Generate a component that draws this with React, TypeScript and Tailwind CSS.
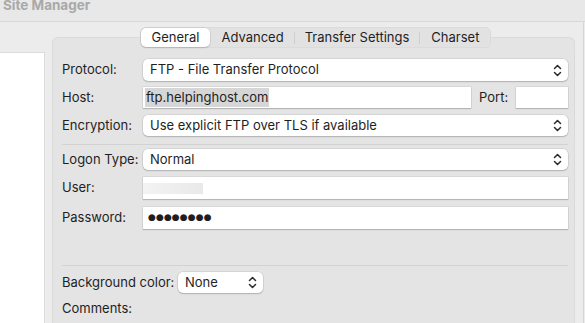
import React from 'react';

function Chevrons() {
  return (
    <svg width="9" height="13" viewBox="0 0 9 13" fill="none" stroke="#2b2b2b" strokeWidth="1.5" strokeLinecap="round" strokeLinejoin="round">
      <path d="M1.5 4.5 L4.5 1.5 L7.5 4.5" />
      <path d="M1.5 8.5 L4.5 11.5 L7.5 8.5" />
    </svg>
  );
}

function Select({ value, className = '' }: { value: string; className?: string }) {
  return (
    <div className={`h-full bg-white rounded-[5px] shadow-[0_0_0_0.5px_rgba(0,0,0,0.12),0_1px_1.5px_rgba(0,0,0,0.18)] pl-[7px] pr-[6px] flex items-center justify-between ${className}`}>
      <span>{value}</span>
      <Chevrons />
    </div>
  );
}

function Field({ children, className = '' }: { children?: React.ReactNode; className?: string }) {
  return (
    <div className={`h-full bg-white shadow-[0_0_0_0.5px_rgba(0,0,0,0.1),0_1px_1px_rgba(0,0,0,0.16)] flex items-center ${className}`}>
      {children}
    </div>
  );
}

export default function App() {
  return (
    <div className="w-[585px] h-[323px] overflow-hidden bg-[#ececec] flex flex-col font-['Inter','Liberation_Sans',sans-serif] text-[13px] text-[#1f1f1f]">
      {/* title bar */}
      <div className="h-[22px] shrink-0 bg-[#e8e8e8] border-b border-[#d8d8d8] pl-[3px] text-[13.5px] font-bold text-[#a9a9a9] leading-[11px]">
        Site Manager
      </div>

      <div className="flex flex-1 min-h-0">
        {/* site tree */}
        <div className="w-[45px] shrink-0 mt-[30px] bg-white border-r border-t border-[#dcdcdc]" />

        {/* settings */}
        <div className="ml-[7px] w-[523px] shrink-0 pt-[5px] flex flex-col">
          <div className="flex justify-center relative z-10 pl-[4px]">
            <div className="h-[21px] flex items-center bg-[#e2e2e2] rounded-[6px] shadow-[inset_0_0_0_0.5px_rgba(0,0,0,0.06)] pl-[1px] pr-[1px]">
              <div className="h-[19px] px-[11px] flex items-center bg-white rounded-[5px] shadow-[0_0_0_0.5px_rgba(0,0,0,0.1),0_1px_1.5px_rgba(0,0,0,0.15)]">
                General
              </div>
              <div className="pl-[11px] pr-[10px]">Advanced</div>
              <div className="w-px h-[12px] bg-[#cfcfcf]" />
              <div className="px-[10px]">Transfer Settings</div>
              <div className="w-px h-[12px] bg-[#cfcfcf]" />
              <div className="px-[11px]">Charset</div>
            </div>
          </div>

          <div className="-mt-[11px] flex-1 bg-[#e4e4e4] border border-b-0 border-[#dadada] rounded-t-[6px] pt-[21px] pl-[9px] pr-[6px]">
            <div className="h-[22px] flex items-center">
              <div className="w-[81px] shrink-0">Protocol:</div>
              <Select value="FTP - File Transfer Protocol" className="flex-1" />
            </div>

            <div className="h-[21px] mt-[6px] flex items-center">
              <div className="w-[81px] shrink-0">Host:</div>
              <Field className="w-[328px] pl-[2px]">
                <span className="bg-[#d6d6d6] px-[1px] leading-[19px]">ftp.helpinghost.com</span>
              </Field>
              <div className="ml-[8px]">Port:</div>
              <Field className="ml-auto w-[52px]" />
            </div>

            <div className="h-[21px] mt-[7px] flex items-center">
              <div className="w-[81px] shrink-0">Encryption:</div>
              <Select value="Use explicit FTP over TLS if available" className="flex-1" />
            </div>

            <div className="h-px mt-[8px] bg-[#d2d2d2]" />

            <div className="h-[21px] mt-[4px] flex items-center">
              <div className="w-[81px] shrink-0">Logon Type:</div>
              <Select value="Normal" className="flex-1" />
            </div>

            <div className="h-[22px] mt-[7px] flex items-center">
              <div className="w-[81px] shrink-0">User:</div>
              <Field className="flex-1 items-end pb-[5px]">
                <div className="w-[60px] h-[11px] bg-gradient-to-r from-[#f3f3f3] to-[#e9e9e9]" />
              </Field>
            </div>

            <div className="h-[22px] mt-[8px] flex items-center">
              <div className="w-[81px] shrink-0">Password:</div>
              <Field className="flex-1 pl-[5px]">
                <span className="font-['DejaVu_Sans',sans-serif] text-[9px] tracking-[0.1px] text-[#1e1e1e]">●●●●●●●●</span>
              </Field>
            </div>

            <div className="h-px mt-[36px] bg-[#d2d2d2]" />

            <div className="h-[21px] mt-[6px] flex items-center">
              <div className="w-[116px] shrink-0">Background color:</div>
              <Select value="None" className="w-[85px]" />
            </div>

            <div className="mt-[8px] leading-[14px]">Comments:</div>
          </div>
        </div>

        <div className="flex-1 flex justify-end">
          <div className="w-px bg-[#d6d6d6] mr-[1px]" />
        </div>
      </div>
    </div>
  );
}
